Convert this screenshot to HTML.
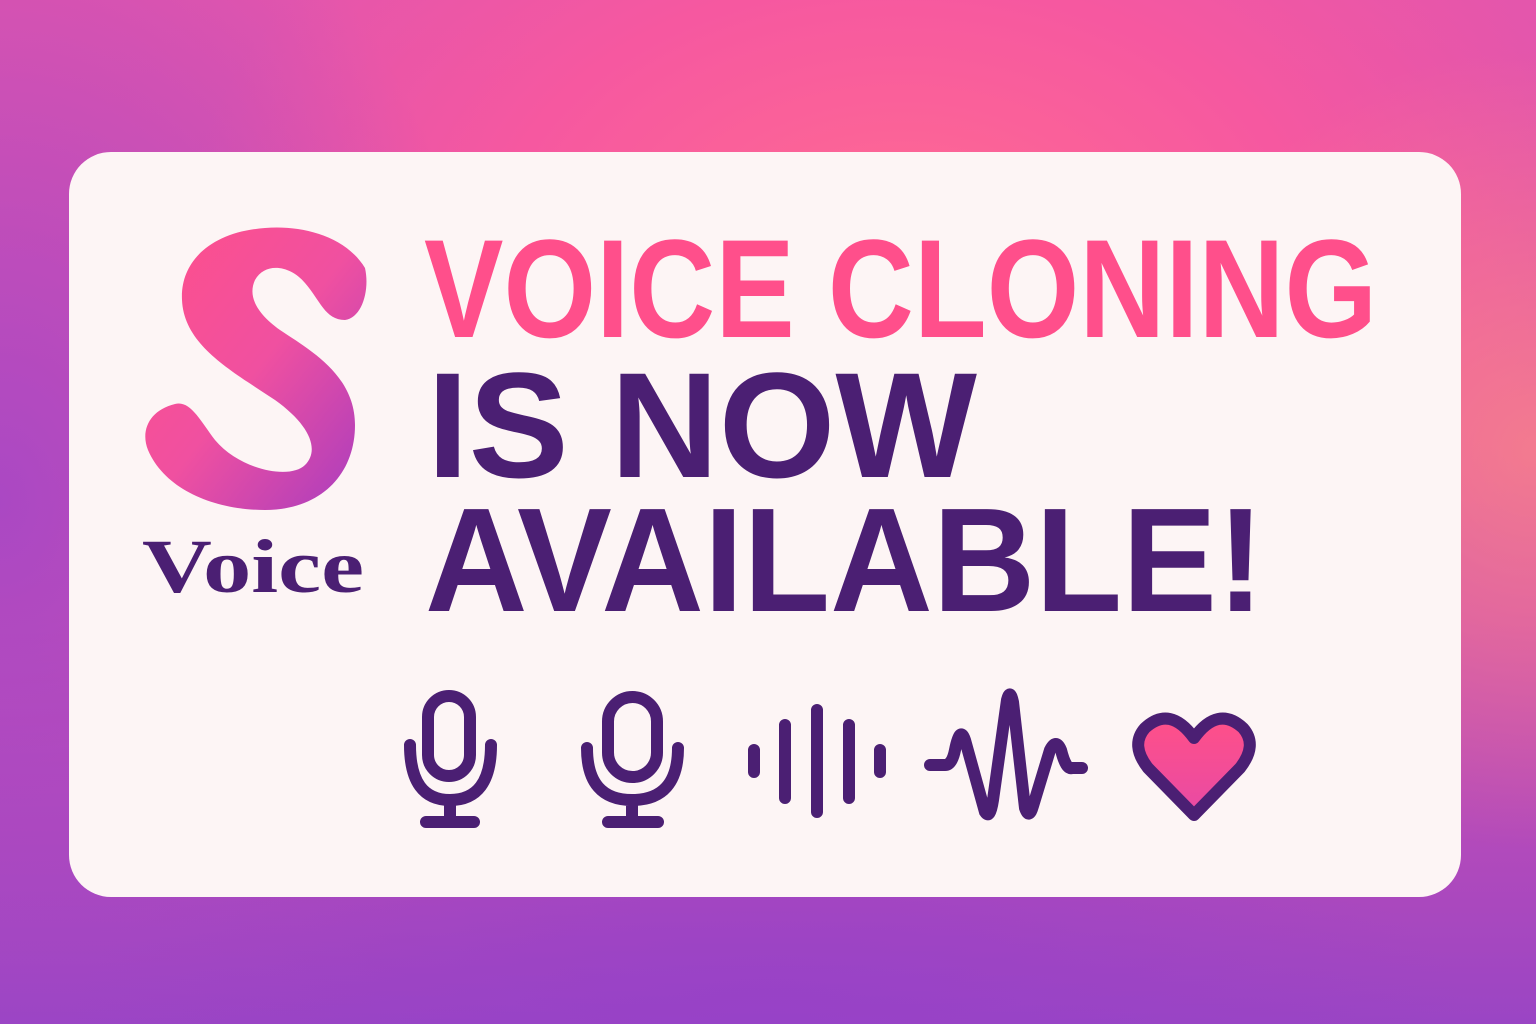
<!DOCTYPE html>
<html><head><style>
body{margin:0;width:1536px;height:1024px;overflow:hidden;font-family:"Liberation Sans",sans-serif;
background:radial-gradient(ellipse 900px 600px at 900px 250px,#ff6b92 0%,#f658a0 45%,rgba(240,80,160,0) 80%),linear-gradient(180deg,#e456ac 0%,#d050b0 60%,#9a45c4 100%);}
.bg2{position:absolute;inset:0;background:radial-gradient(ellipse 500px 700px at 0px 500px,rgba(160,70,200,.8),rgba(160,70,200,0)),radial-gradient(ellipse 400px 400px at 1536px 450px,rgba(255,140,130,.7),rgba(255,140,130,0)),radial-gradient(ellipse 700px 250px at 768px 1024px,rgba(150,65,200,.8),rgba(150,65,200,0))}
.card{position:absolute;left:69px;top:152px;width:1392px;height:745px;border-radius:42px;background:#fdf5f5}
.t{position:absolute;font-weight:bold;white-space:nowrap;transform-origin:0 0;line-height:1}
</style></head><body><div class="bg2"></div>
<div class="card"></div>
<svg style="position:absolute;left:0;top:0" width="1536" height="1024">
<defs><linearGradient id="g" x1="0" y1="0" x2="1" y2="1"><stop offset="0" stop-color="#ff4f8a"/><stop offset=".5" stop-color="#f050a0"/><stop offset="1" stop-color="#a63cc0"/></linearGradient>
<linearGradient id="h" x1="0" y1="0" x2="0" y2="1"><stop offset="0" stop-color="#ff5088"/><stop offset="1" stop-color="#e84aa5"/></linearGradient></defs>
<path fill="url(#g)" d="M365 268 C345 235 300 225 265 228 C210 232 180 262 182 300 C184 345 230 370 275 400 C310 425 320 450 305 465 C290 480 240 470 215 440 C200 420 190 400 175 404 C150 410 140 430 148 450 C165 490 215 510 265 510 C320 510 355 475 355 425 C355 375 310 350 280 330 C255 312 248 295 255 280 C265 262 290 265 305 283 C320 300 325 320 345 320 C362 318 370 290 365 268Z"/>
<text x="142" y="592" font-family="Liberation Serif,serif" font-weight="bold" font-size="76" fill="#4b1f73" textLength="222" lengthAdjust="spacingAndGlyphs">Voice</text>
<g fill="none" stroke="#4b1f73" stroke-width="12" stroke-linecap="round">
<rect x="428" y="696" width="42" height="80" rx="21"/><path d="M410 745 Q410 800 450 800 Q491 800 491 745 M450 800 V822 M426 822 H474"/>
<rect x="608" y="697" width="49" height="80" rx="24.5"/><path d="M587 748 Q587 800 632 800 Q678 800 678 748 M632 800 V822 M608 822 H658"/>
<path d="M754 750 V772 M785 725 V798 M817 710 V812 M849 725 V798 M880 750 V772"/>
<path d="M930 765 H945 Q952 765 955 750 Q960 725 965 740 L985 812 Q990 820 993 800 L1007 700 Q1010 688 1013 702 L1025 808 Q1029 820 1033 806 L1050 750 Q1056 738 1061 750 Q1066 770 1072 768 H1082"/>
<path fill="url(#h)" d="M1194 815 L1148 768 Q1130 745 1145 728 Q1170 705 1194 738 Q1218 705 1243 728 Q1258 745 1240 768Z" stroke-linejoin="round"/>
</g></svg>
<div class="t" style="left:424px;top:219px;font-size:140px;color:#ff4f8b;transform:scaleX(.851)">VOICE CLONING</div>
<div class="t" style="left:427px;top:350px;font-size:150px;color:#4b1f73;transform:scaleX(1.0)">IS NOW</div>
<div class="t" style="left:425px;top:487px;font-size:148px;color:#4b1f73;transform:scaleX(.96)">AVAILABLE!</div>
</body></html>
